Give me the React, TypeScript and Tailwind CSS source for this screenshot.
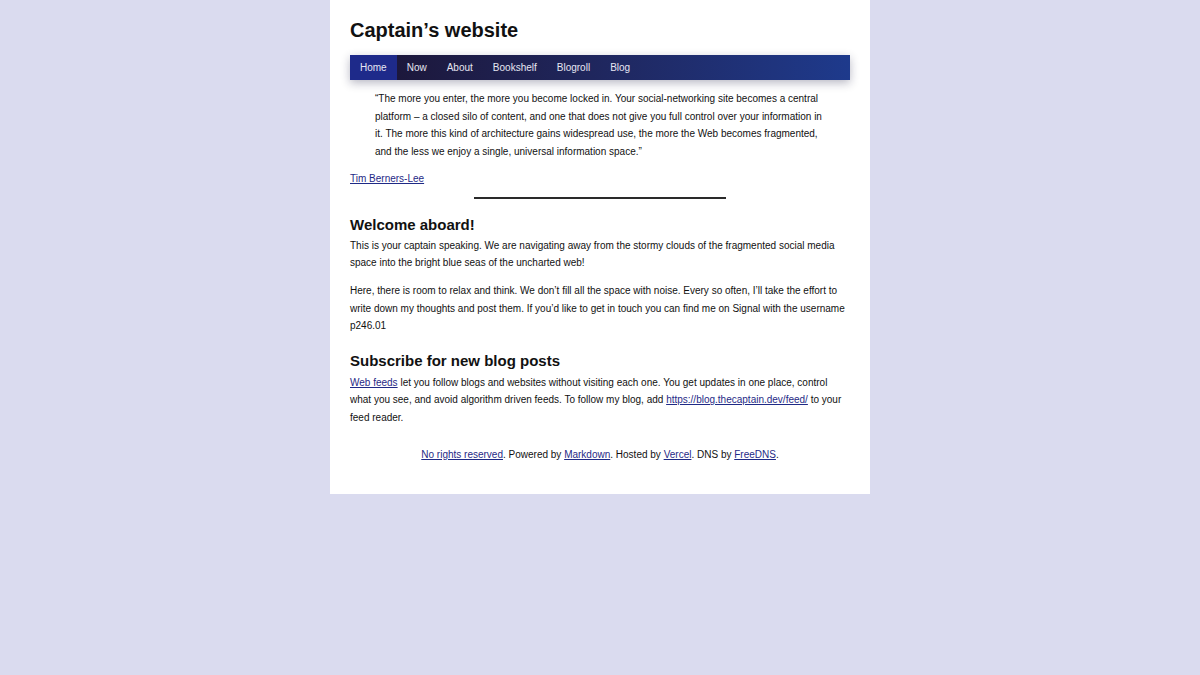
const font = { fontFamily: '"Liberation Sans", Arial, sans-serif' };

const navItems = ["Home", "Now", "About", "Bookshelf", "Blogroll", "Blog"];

function Link({ children }: { children: React.ReactNode }) {
  return <a href="#" className="text-[#1f2a86] underline">{children}</a>;
}

export default function App() {
  return (
    <div className="min-h-[675px] bg-[#dadbef]" style={font}>
      <div className="mx-auto w-[540px] bg-white px-5 pt-[18px] pb-[31px] text-[10px] leading-[17.5px] text-[#111]">
        <h1 className="text-[20px] font-bold leading-[24px]">Captain’s website</h1>

        <nav className="mt-[13px] flex h-[25px] bg-gradient-to-r from-[#1b1434] to-[#1e3a8c] shadow-[0_3px_10px_rgba(20,20,60,0.3)]">
          {navItems.map((item, i) => (
            <a
              key={item}
              href="#"
              className={
                "flex items-center px-[10px] text-[10px] text-[#e6e6f2] " + (i === 0 ? "bg-[#1e2a8a]" : "")
              }
            >
              {item}
            </a>
          ))}
        </nav>

        <blockquote className="mx-[25px] mt-[10px]">
          “The more you enter, the more you become locked in. Your social-networking site becomes a central platform – a closed silo of content, and one that does not give you full control over your information in it. The more this kind of architecture gains widespread use, the more the Web becomes fragmented, and the less we enjoy a single, universal information space.”
        </blockquote>

        <p className="mt-[10px]">
          <Link>Tim Berners-Lee</Link>
        </p>

        <hr className="mx-auto mt-[9px] w-[252px] border-t-2 border-[#2a2a2a]" />

        <h2 className="mt-[17px] text-[15px] font-bold leading-[18px]">Welcome aboard!</h2>
        <p className="mt-[3px]">
          This is your captain speaking. We are navigating away from the stormy clouds of the fragmented social media space into the bright blue seas of the uncharted web!
        </p>
        <p className="mt-[10.5px]">
          Here, there is room to relax and think. We don’t fill all the space with noise. Every so often, I’ll take the effort to write down my thoughts and post them. If you’d like to get in touch you can find me on Signal with the username p246.01
        </p>

        <h2 className="mt-[17px] text-[15px] font-bold leading-[18px]">Subscribe for new blog posts</h2>
        <p className="mt-[4px]">
          <Link>Web feeds</Link> let you follow blogs and websites without visiting each one. You get updates in one place, control what you see, and avoid algorithm driven feeds. To follow my blog, add{" "}
          <Link>https://blog.thecaptain.dev/feed/</Link> to your feed reader.
        </p>

        <footer className="mt-[19.5px] text-center">
          <Link>No rights reserved</Link>. Powered by <Link>Markdown</Link>. Hosted by <Link>Vercel</Link>. DNS by{" "}
          <Link>FreeDNS</Link>.
        </footer>
      </div>
    </div>
  );
}
